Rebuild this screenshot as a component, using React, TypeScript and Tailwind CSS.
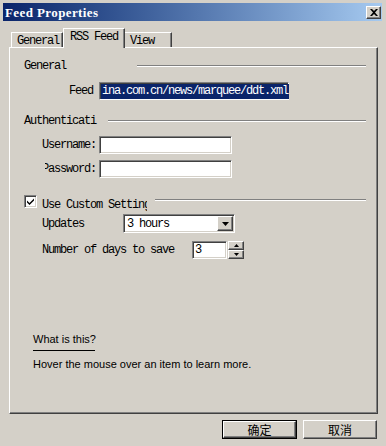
const mono = "font-['Liberation_Mono',monospace] text-[12px] tracking-[-1.2px] leading-none text-black";

function Sunken({ className = "", children }: { className?: string; children?: React.ReactNode }) {
  return (
    <div
      className={`border border-t-[#808080] border-l-[#808080] border-r-white border-b-white shadow-[inset_1px_1px_0_#404040,inset_-1px_-1px_0_#d4d0c8] bg-white ${className}`}
    >
      {children}
    </div>
  );
}

function Raised({ className = "", children }: { className?: string; children?: React.ReactNode }) {
  return (
    <div
      className={`border border-t-white border-l-white border-r-[#404040] border-b-[#404040] shadow-[inset_-1px_-1px_0_#808080] bg-[#d4d0c8] flex items-center justify-center ${className}`}
    >
      {children}
    </div>
  );
}

function GroupHeader({ label, width }: { label: string; width: string }) {
  return (
    <div className="flex items-center h-[12px]">
      <div className={`${width} ${mono}`}>{label}</div>
      <div className="flex-1 h-[2px] border-t border-t-[#808080] border-b border-b-white" />
    </div>
  );
}

export default function App() {
  return (
    <div className="w-[386px] h-[446px] bg-[#d4d0c8] pt-[3px] pl-[3px] pr-[4px] flex flex-col overflow-hidden">
      {/* Title bar */}
      <div className="h-[18px] flex items-center justify-between bg-linear-to-r from-[#0a246a] to-[#a6caf0]">
        <span className="pl-[2px] font-['Liberation_Serif',serif] font-bold text-[13px] tracking-[0.4px] text-white leading-none">
          Feed Properties
        </span>
        <Raised className="w-[15px] h-[13px] mr-[1px]">
          <svg width="8" height="7" viewBox="0 0 8 7">
            <path d="M0 0h2l2 2 2-2h2L5 3.5 8 7H6L4 5 2 7H0l3-3.5z" fill="#000" />
          </svg>
        </Raised>
      </div>

      <div className="ml-[6px] w-[369px] flex flex-col">
        {/* Tabs */}
        <div className="mt-[7px] h-[19px] flex items-end pl-[2px]">
          <div className={`w-[52px] h-[15px] border-t border-l border-t-white border-l-white border-r border-r-[#404040] shadow-[inset_-1px_0_0_#808080] flex items-center pl-[5px] pt-[2px] ${mono}`}>
            General
          </div>
          <div className={`relative z-10 w-[62px] h-[20px] -mb-px bg-[#d4d0c8] border-t border-l border-t-white border-l-white border-r border-r-[#404040] shadow-[inset_-1px_0_0_#808080] flex items-center pl-[6px] pb-[3px] ${mono}`}>
            RSS Feed
          </div>
          <div className={`w-[47px] h-[15px] border-t border-t-white border-r border-r-[#404040] shadow-[inset_-1px_0_0_#808080] flex items-center pl-[5px] pt-[2px] ${mono}`}>
            View
          </div>
        </div>

        {/* Panel */}
        <div className="h-[367px] border border-t-white border-l-white border-r-[#404040] border-b-[#404040] shadow-[inset_-1px_-1px_0_#808080] flex flex-col pl-[14px] pr-[11px]">
          <div className="mt-[12px]">
            <GroupHeader label="General" width="w-[113px]" />
          </div>

          <div className="mt-[10px] flex items-center h-[18px]">
            <div className={`w-[69px] text-right ${mono}`}>Feed</div>
            <Sunken className="ml-[6px] w-[190px] h-[18px] flex items-center pl-[1px]">
              <span className={`${mono} bg-[#0a246a] text-white h-[15px] flex items-center px-[1px]`}>
                ina.com.cn/news/marquee/ddt.xml
              </span>
            </Sunken>
          </div>

          <div className="mt-[15px]">
            <GroupHeader label="Authenticati" width="w-[84px]" />
          </div>

          <div className="mt-[9px] flex items-center h-[18px]">
            <div className={`pl-[18px] w-[75px] ${mono}`}>Username:</div>
            <Sunken className="w-[133px] h-[18px]" />
          </div>

          <div className="mt-[6px] flex items-center h-[18px]">
            <div className="ml-[21px] w-[51px] overflow-hidden flex justify-end">
              <span className={`whitespace-nowrap ${mono}`}>Password:</span>
            </div>
            <Sunken className="ml-[3px] w-[133px] h-[18px]" />
          </div>

          <div className="mt-[17px] flex items-center h-[13px]">
            <Sunken className="w-[13px] h-[13px] flex items-center justify-center">
              <svg width="7" height="7" viewBox="0 0 7 7">
                <path d="M0 2.5l2.5 2.5L7 0.5v2L2.5 7 0 4.5z" fill="#000" />
              </svg>
            </Sunken>
            <div className="ml-[5px] w-[105px] overflow-hidden">
              <span className={`whitespace-nowrap ${mono}`}>Use Custom Setting</span>
            </div>
            <div className="ml-[8px] flex-1 h-[2px] border-t border-t-[#808080] border-b border-b-white -mt-[3px]" />
          </div>

          <div className="mt-[6px] flex items-center h-[19px]">
            <div className={`pl-[18px] w-[99px] ${mono}`}>Updates</div>
            <Sunken className="w-[112px] h-[19px] flex items-center justify-between pl-[3px] pr-[1px]">
              <span className={mono}>3 hours</span>
              <Raised className="w-[16px] h-[15px]">
                <svg width="7" height="4" viewBox="0 0 7 4">
                  <path d="M0 0h7L3.5 4z" fill="#000" />
                </svg>
              </Raised>
            </Sunken>
          </div>

          <div className="mt-[8px] flex items-center h-[18px]">
            <div className={`pl-[18px] w-[168px] ${mono}`}>Number of days to save</div>
            <Sunken className="w-[35px] h-[18px] flex items-center pl-[2px]">
              <span className={mono}>3</span>
            </Sunken>
            <div className="ml-[1px] w-[16px] h-[18px] flex flex-col">
              <Raised className="h-[9px]">
                <svg width="5" height="3" viewBox="0 0 5 3">
                  <path d="M0 3h5L2.5 0z" fill="#000" />
                </svg>
              </Raised>
              <Raised className="h-[9px]">
                <svg width="5" height="3" viewBox="0 0 5 3">
                  <path d="M0 0h5L2.5 3z" fill="#000" />
                </svg>
              </Raised>
            </div>
          </div>

          <div className="mt-[74px] ml-[9px] flex flex-col items-start font-['Liberation_Sans',sans-serif] text-[11px] leading-none text-black">
            <span className="h-[12px] flex items-center">What is this?</span>
            <div className="mt-[5px] w-[62px] h-px bg-black" />
            <span className="mt-[7px] h-[12px] flex items-center">Hover the mouse over an item to learn more.</span>
          </div>
        </div>

        {/* Buttons */}
        <div className="mt-[6px] flex justify-end gap-[6px] pr-[1px]">
          <div className="w-[75px] h-[19px] border border-black">
            <Raised className="w-full h-full font-['Noto_Sans_CJK_SC',sans-serif] text-[12px] leading-none text-black">
              确定
            </Raised>
          </div>
          <Raised className="w-[74px] h-[19px] font-['Noto_Sans_CJK_SC',sans-serif] text-[12px] leading-none text-black">
            取消
          </Raised>
        </div>
      </div>
    </div>
  );
}
